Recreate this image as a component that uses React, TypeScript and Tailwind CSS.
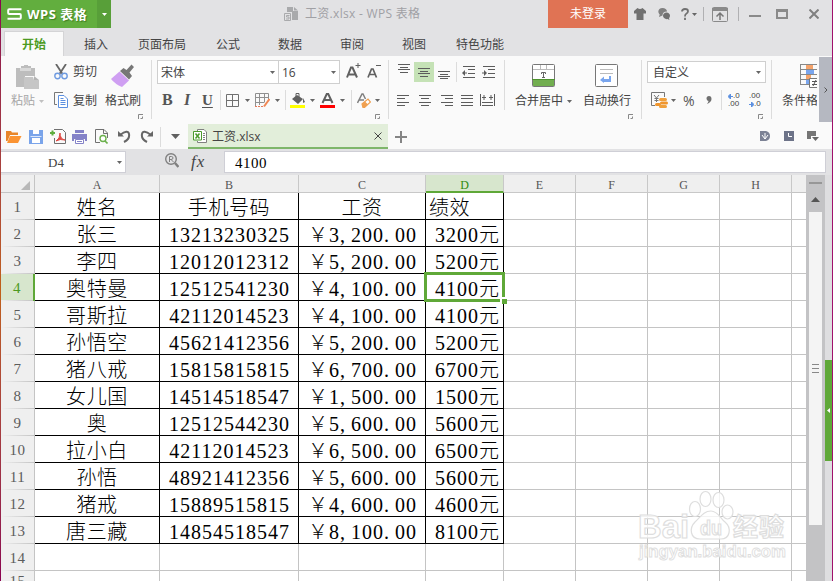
import type { ReactNode } from 'react'
import clsx from 'clsx'

const columns = [
    { name: 'A', width: 'w-[125px]' },
    { name: 'B', width: 'w-[139px]' },
    { name: 'C', width: 'w-[127px]' },
    { name: 'D', width: 'w-[78px]' },
    { name: 'E', width: 'w-[72px]' },
    { name: 'F', width: 'w-[72px]' },
    { name: 'G', width: 'w-[72px]' },
    { name: 'H', width: 'w-[72px]' },
]

const rows = [
    ['姓名', '手机号码', '工资', '绩效'],
    ['张三', '13213230325', '￥3,200.00', '3200元'],
    ['李四', '12012012312', '￥5,200.00', '5200元'],
    ['奥特曼', '12512541230', '￥4,100.00', '4100元'],
    ['哥斯拉', '42112014523', '￥4,100.00', '4100元'],
    ['孙悟空', '45621412356', '￥5,200.00', '5200元'],
    ['猪八戒', '15815815815', '￥6,700.00', '6700元'],
    ['女儿国', '14514518547', '￥1,500.00', '1500元'],
    ['奥', '12512544230', '￥5,600.00', '5600元'],
    ['拉小白', '42112014523', '￥6,500.00', '6500元'],
    ['孙悟', '48921412356', '￥5,600.00', '5600元'],
    ['猪戒', '15889515815', '￥4,600.00', '4600元'],
    ['唐三藏', '14854518547', '￥8,100.00', '8100元'],
    [],
    [],
]

const menu = [
    { label: '插入', className: 'ml-[20px] w-[24px]' },
    { label: '页面布局', className: 'ml-[30px] w-[48px]' },
    { label: '公式', className: 'ml-[30px] w-[24px]' },
    { label: '数据', className: 'ml-[38px] w-[24px]' },
    { label: '审阅', className: 'ml-[38px] w-[24px]' },
    { label: '视图', className: 'ml-[38px] w-[24px]' },
    { label: '特色功能', className: 'ml-[30px] w-[48px]' },
]

type IconProps = { w: number; h: number; className?: string; children: ReactNode }

function Icon({ w, h, className, children }: IconProps) {
    return (
        <svg width={w} height={h} viewBox={`0 0 ${w} ${h}`} fill="none" className={clsx('shrink-0', className)}>
            {children}
        </svg>
    )
}

function Caret({ className, color = '#666' }: { className?: string; color?: string }) {
    return (
        <Icon w={5} h={3} className={className}>
            <path d="M0 0h5L2.5 3z" fill={color} />
        </Icon>
    )
}

function Divider({ className }: { className?: string }) {
    return <div className={clsx('w-px shrink-0', className)} />
}

function Launcher({ className }: { className?: string }) {
    return (
        <Icon w={5} h={5} className={className}>
            <path d="M.5 5V.5H5M2.5 4.5h2v-2" stroke="#888" />
        </Icon>
    )
}

function Lines({ d, w = 13, h = 11, className }: { d: string; w?: number; h?: number; className?: string }) {
    return (
        <Icon w={w} h={h} className={className}>
            <path d={d} stroke="#5c5c5c" />
        </Icon>
    )
}

function TitleBar() {
    return (
        <div className="flex h-[28px] shrink-0 items-center">
            <div className="flex h-full w-[96px] items-center bg-[#62ae3e] text-white">
                <Icon w={15} h={12} className="ml-[6px]">
                    <path d="M14.5 1.2H2.200Q1.2 1.2 1.2 2.200V5Q1.2 6 2.200 6h10.600Q13.800 6 13.800 7v2.800q0 1-1 1H.5" stroke="#fff" strokeWidth="2" />
                </Icon>
                <span className="ml-[5px] pt-px text-[13px] font-bold tracking-[0.500px] whitespace-nowrap [text-shadow:1px_1px_1px_#3f7d22]">WPS 表格</span>
            </div>
            <div className="flex h-full w-[14px] items-center justify-center bg-[#589f39]">
                <Caret color="#fff" />
            </div>
            <Icon w={14} h={14} className="ml-[173px]">
                <path d="M3 0h6v4h5v9H8V5H3z" fill="#a9aaac" />
                <path d="M10 0l4 3.500h-4z" fill="#a9aaac" />
                <path d="M.5 6.500h6v7h-6z" fill="#e2e2e4" stroke="#a9aaac" />
                <path d="M5.500 8.500h-3v1.500h2.500v2h-3" stroke="#a9aaac" />
            </Icon>
            <span className="ml-[7px] w-[120px] text-[12px] tracking-[0.300px] whitespace-nowrap text-[#a0a0a4]">工资.xlsx - WPS 表格</span>
            <div className="ml-[123px] flex h-full w-[80px] items-center justify-center bg-[#e07354] text-[12px] text-white">未登录</div>
            <Icon w={12} h={12} className="ml-[6px]">
                <path d="M0 3L3.500 0Q6 2 8.500 0L12 3v2.500h-2.500V12h-7V5.500H0z" fill="#707070" />
            </Icon>
            <Icon w={12} h={12} className="ml-[12px]">
                <path d="M4.500 0C7 0 9 1.500 9 3.500 6 3.500 4.500 5 4.500 7.500L1 9l.7-2.500C-1 4 .5 0 4.500 0z" fill="#808080" />
                <path d="M8.500 4.500c2 0 3.500 1.500 3.500 3.300 0 1-.4 1.800-1 2.400l.5 1.800-2-.9C7 11.500 5 9.700 5 7.800s1.500-3.300 3.500-3.300z" fill="#707070" />
            </Icon>
            <Icon w={8} h={12} className="ml-[11px]">
                <path d="M1 3.500Q1 1 4 1t3 2.300Q7 5 5 6 4 6.500 4 8.500M4 9.800V12" stroke="#707070" strokeWidth="1.800" />
            </Icon>
            <Caret className="ml-[3px]" />
            <Divider className="ml-[6px] h-[14px] bg-[#b0b0b2]" />
            <Icon w={16} h={15} className="ml-[8px]">
                <rect x=".5" y=".5" width="15" height="14" rx="1" stroke="#8a8a8a" />
                <path d="M0 1h16v3H0z" fill="#8a8a8a" />
                <path d="M8 13V7M4.500 9.500L8 6l3.500 3.500" stroke="#777" strokeWidth="1.500" />
            </Icon>
            <Divider className="ml-[10px] h-[14px] bg-[#b0b0b2]" />
            <Icon w={12} h={12} className="ml-[10px]">
                <path d="M0 8h12" stroke="#8a8a8a" strokeWidth="2" />
            </Icon>
            <Icon w={12} h={10} className="ml-[15px]">
                <path d="M0 0h12v10H0zM2 3v5h8V3z" fill="#8a8a8a" fillRule="evenodd" />
            </Icon>
            <Icon w={10} h={10} className="ml-[21px]">
                <path d="M.5.5l9 9M9.500.5l-9 9" stroke="#808080" strokeWidth="2" />
            </Icon>
        </div>
    )
}

function MenuTabs() {
    return (
        <div className="flex h-[28px] shrink-0 items-end text-[12px] text-[#444]">
            <div className="ml-[3px] flex h-[25px] w-[60px] items-center justify-center border border-b-0 border-[#d4d4d6] bg-[#fafafa] pt-[2px] font-bold text-[#4c9a22]">
                开始
            </div>
            {menu.map((item) => (
                <span key={item.label} className={clsx('flex h-[24px] items-center pt-[2px] whitespace-nowrap', item.className)}>
                    {item.label}
                </span>
            ))}
        </div>
    )
}

function ClipboardGroup() {
    return (
        <div className="flex h-full w-[150px] shrink-0 text-[12px] text-[#444]">
            <div className="flex w-[53px] flex-col pt-[9px]">
                <Icon w={24} h={24} className="ml-[15px]">
                    <path d="M0 3h5V1h3V0h4v1h3v2h4v8H9v11H0z" fill="#bdbdbd" />
                    <path d="M4 3h11v3H4z" fill="#d9d9d9" />
                    <path d="M8 12h9l1 3h5v9H8z" fill="#c6c6c6" />
                    <path d="M18 11l5 4h-5z" fill="#b5b5b5" />
                </Icon>
                <div className="mt-[3px] ml-[10px] flex items-center text-[#a6a6a6]">
                    <span className="leading-[18px]">粘贴</span>
                    <Caret className="ml-[4px]" color="#c0c0c0" />
                </div>
            </div>
            <div className="flex w-[47px] flex-col pt-[7px]">
                <div className="flex h-[18px] items-center gap-[5px]">
                    <Icon w={14} h={16}>
                        <path d="M2 0l6.500 10M12 0L5.500 10" stroke="#666" strokeWidth="1.800" />
                        <circle cx="3.500" cy="12" r="2.700" stroke="#6f9be0" strokeWidth="1.400" />
                        <circle cx="10.500" cy="12" r="2.700" stroke="#6f9be0" strokeWidth="1.400" />
                    </Icon>
                    <span className="whitespace-nowrap">剪切</span>
                </div>
                <div className="mt-[10px] flex h-[18px] items-center gap-[5px]">
                    <Icon w={14} h={16}>
                        <path d="M9 .5H.5v12H3" stroke="#777" />
                        <path d="M4.500 3.500H10l3.500 3.500v8.500h-9z" fill="#fff" stroke="#5b8fe0" />
                        <path d="M6.500 8.500h5M6.500 10.500h5M6.500 12.500h5M6.500 6.500h3" stroke="#5b8fe0" />
                    </Icon>
                    <span className="pt-px whitespace-nowrap">复制</span>
                </div>
            </div>
            <div className="flex flex-col pt-[8px] pl-[4px]">
                <Icon w={24} h={23} className="ml-[6px]">
                    <path d="M8.500 7.500L18 16.500 11 23Q4 20 0 15z" fill="#cf9ff2" />
                    <path d="M9 7l3.500-3 3 2L20.500.5 23 3l-4.500 5.500L21 12l-3 3.500z" fill="#777" />
                </Icon>
                <span className="mt-[5px] leading-[18px] whitespace-nowrap">格式刷</span>
                <Launcher className="mt-[4px] ml-[33px]" />
            </div>
        </div>
    )
}

function FontGroup() {
    return (
        <div className="flex h-full w-[236px] shrink-0 flex-col pt-[4px] pl-[5px]">
            <div className="flex h-[24px] text-[12px] text-[#444]">
                <div className="flex w-[122px] items-center justify-between border border-[#cfcfcf] bg-white pr-[3px] pl-[3px]">
                    <span className="pt-px">宋体</span> <Caret />
                </div>
                <div className="-ml-px flex w-[62px] items-center justify-between border border-[#cfcfcf] bg-white pr-[3px] pl-[3px]">
                    <span className="pt-px">16</span> <Caret />
                </div>
                <Icon w={15} h={16} className="mt-[3px] ml-[6px]">
                    <path d="M1 14.500L5 4.500h1.500l4.500 10M3 11.500h6" stroke="#606060" strokeWidth="2" />
                    <path d="M9.500 2.500h5M12 0v5" stroke="#606060" />
                </Icon>
                <Icon w={14} h={16} className="mt-[3px] ml-[6px]">
                    <path d="M1 14.500l3.500-8.500H6l3.500 8.500M3 11.500h5" stroke="#606060" strokeWidth="1.700" />
                    <path d="M9 2.500h5" stroke="#606060" />
                </Icon>
            </div>
            <div className="mt-[6px] flex h-[20px] items-center font-['Liberation_Serif',serif] text-[16px] font-bold text-[#555]">
                <span className="ml-[5px] w-[12px]">B</span>
                <span className="ml-[10px] w-[8px] italic">I</span>
                <span className="ml-[10px] w-[12px] text-[15px] underline underline-offset-2">U</span>
                <Divider className="ml-[6px] h-[20px] bg-[#dcdcdc]" />
                <Icon w={13} h={13} className="ml-[5px]">
                    <path d="M.5.5h12v12H.5zM6.500 0v13M0 6.500h13" stroke="#707070" />
                </Icon>
                <Caret className="ml-[6px]" />
                <Icon w={15} h={15} className="ml-[5px]">
                    <path d="M.5 13V.5h13V6M.5 4.500h13M.5 9.500h9M4.500 0v12M9.500 0v9" stroke="#909090" />
                    <path d="M0 13.500h9" stroke="#e5795a" strokeDasharray="2 1" />
                    <path d="M9 13.500L14.500 6" stroke="#f08754" strokeWidth="2" />
                </Icon>
                <Caret className="ml-[5px]" />
                <Divider className="ml-[5px] h-[20px] bg-[#dcdcdc]" />
                <Icon w={15} h={15} className="ml-[4px]">
                    <path d="M2 6l5-4 6 4-5 5zM13 5l2 4-2 1z" fill="#606060" />
                    <path d="M6 5V.5h3V4" stroke="#606060" />
                    <path d="M0 12h15v3H0z" fill="#ff0" />
                </Icon>
                <Caret className="ml-[5px]" />
                <Icon w={15} h={15} className="ml-[5px]">
                    <path d="M2.500 10L7 .5h1L12.500 10M4.500 7h6" stroke="#606060" strokeWidth="2" />
                    <path d="M0 12h15v3H0z" fill="#f00" />
                </Icon>
                <Caret className="ml-[5px]" />
                <Divider className="ml-[6px] h-[20px] bg-[#dcdcdc]" />
                <Icon w={14} h={15} className="ml-[5px]">
                    <path d="M.5 10L5 1h1l2.500 5M2.500 7H7" stroke="#808080" strokeWidth="1.500" />
                    <path d="M5 11l6-5 2.500 3-6 5.500H6z" fill="#fff" stroke="#f0a050" strokeWidth="1.200" />
                    <path d="M5 11l3-2.500 3 3-3.500 3H6z" fill="#f0a050" />
                </Icon>
                <Caret className="ml-[4px]" />
            </div>
            <Launcher className="mt-[4px] ml-[218px]" />
        </div>
    )
}

function AlignGroup() {
    return (
        <div className="flex h-full w-[115px] shrink-0 flex-col pt-[6px]">
            <div className="flex h-[20px] items-center">
                <Lines className="mb-[7px] ml-[9px]" d="M0 .5h12M2 3.500h8M0 5.500h12M2 8.500h8" h={9} />
                <div className="ml-[3px] flex h-[20px] w-[20px] items-center justify-center bg-[#c5e2b6]">
                    <Lines w={12} h={9} d="M0 .5h12M2 3.500h8M0 5.500h12M2 8.500h8" />
                </div>
                <Lines className="mt-[6px] ml-[4px]" w={12} h={8} d="M0 .5h12M2 3.500h8M0 5.500h12M2 7.500h8" />
                <Divider className="ml-[6px] h-[20px] bg-[#dcdcdc]" />
                <Lines className="ml-[5px]" h={14} d="M1 1.500h12M6 4.500h7M6 8.500h7M1 12.500h12M0 8h5M2.500 5.500v5M1.500 6.500v3" />
                <Lines className="ml-[7px]" h={14} d="M1 1.500h12M6 4.500h7M6 8.500h7M1 12.500h12M0 8h5M2.500 5.500v5M3.500 6.500v3" />
            </div>
            <div className="mt-[8px] flex h-[20px] items-center">
                <Lines className="ml-[8px]" w={12} d="M0 .5h12M0 3.500h8M0 7.500h12M0 10.500h8" />
                <Lines className="ml-[10px]" w={12} d="M0 .5h12M2 3.500h8M0 7.500h12M2 10.500h8" />
                <Lines className="ml-[10px]" w={12} d="M0 .5h12M4 3.500h8M0 7.500h12M4 10.500h8" />
                <Lines className="ml-[8px]" w={12} d="M0 .5h12M0 3.500h12M0 7.500h12M0 10.500h12" />
                <Lines className="ml-[7px]" w={15} h={12} d="M.5 0v12M14.500 0v12M2 3.500h4M9 3.500h4M4 1v5M11 1v5M2 8.500h11M2 11.500h11" />
            </div>
        </div>
    )
}

function MergeGroup() {
    return (
        <div className="flex h-full w-[136px] shrink-0 pt-[8px] text-[12px] text-[#444]">
            <div className="ml-[10px] flex flex-col">
                <Icon w={23} h={23} className="ml-[17px]">
                    <rect x=".5" y=".5" width="22" height="22" rx="1" fill="#fff" stroke="#777" />
                    <path d="M1 5.500h21M8.500 1v5M14.500 1v5" stroke="#bbb" />
                    <path d="M1 15h21v7H1z" fill="#72ae50" />
                    <path d="M0 15.500h23" stroke="#4f9330" />
                    <path d="M9.500 10V8.500h4V10M11.500 8.500v5M10 13.500h3" stroke="#666" />
                </Icon>
                <div className="mt-[5px] flex items-center">
                    <span className="leading-[18px] whitespace-nowrap">合并居中</span>
                    <Caret className="ml-[4px]" />
                </div>
            </div>
            <div className="ml-[11px] flex flex-col">
                <Icon w={23} h={23} className="ml-[12px]">
                    <rect x=".5" y=".5" width="22" height="22" rx="1" fill="#fff" stroke="#777" />
                    <path d="M5 5.500h13M5 9.500h13" stroke="#bbb" />
                    <path d="M5 16l4-3.500V15h5v-3h2v6H9v1z" fill="#79a5ee" />
                </Icon>
                <span className="mt-[5px] w-[48px] leading-[18px] whitespace-nowrap">自动换行</span>
                <Launcher className="mt-[4px] ml-[45px]" />
            </div>
        </div>
    )
}

function NumberGroup() {
    return (
        <div className="flex h-full w-[129px] shrink-0 flex-col pt-[5px] pl-[5px]">
            <div className="flex h-[22px] w-[119px] items-center justify-between border border-[#cfcfcf] bg-white px-[4px] text-[12px] text-[#444]">
                <span className="pt-px pl-px">自定义</span> <Caret />
            </div>
            <div className="mt-[7px] flex h-[20px] items-center">
                <Icon w={17} h={16} className="ml-[4px]">
                    <path d="M4 13.500H.5V.5h13V5" stroke="#777" />
                    <path d="M3 3l2.500 3L8 3M5.500 6v4M3.500 6.500h4M3.500 8.500h4" stroke="#777" />
                    <rect x="8" y="6" width="8" height="3" rx="1.500" fill="#f0a03c" />
                    <rect x="9" y="9.500" width="8" height="3" rx="1.500" fill="#f0952c" />
                    <rect x="4" y="11" width="6" height="3" rx="1.500" fill="#f0952c" />
                    <rect x="8" y="13" width="8" height="3" rx="1.500" fill="#f0a03c" />
                </Icon>
                <Caret className="ml-[3px]" />
                <span className="ml-[7px] w-[12px] text-[14px] text-[#555]">%</span>
                <Icon w={6} h={8} className="ml-[11px]">
                    <path d="M.5 2.500Q.5 0 3 0t2.500 3Q5.500 6 1 8q1.500-2 1.500-3-2-.5-2-2.500z" fill="#707070" />
                </Icon>
                <Divider className="ml-[9px] h-[20px] bg-[#dcdcdc]" />
                <div className="ml-[6px] flex w-[13px] flex-col font-['Liberation_Sans',sans-serif] text-[8px] leading-[8px] text-[#444]">
                    <span className="flex items-center"><Icon w={5} h={5}><path d="M0 2.500L2.500 0v5zM2 2.500h3" fill="#5b8fe0" stroke="#5b8fe0" /></Icon>.0</span>
                    <span>.00</span>
                </div>
                <div className="ml-[8px] flex w-[13px] flex-col font-['Liberation_Sans',sans-serif] text-[8px] leading-[8px] text-[#444]">
                    <span>.00</span>
                    <span className="flex items-center"><Icon w={5} h={5}><path d="M5 2.500L2.500 0v5zM0 2.500h3" fill="#5b8fe0" stroke="#5b8fe0" /></Icon>.0</span>
                </div>
            </div>
            <Launcher className="mt-[4px] ml-[111px]" />
        </div>
    )
}

function Ribbon() {
    return (
        <div className="flex h-[66px] shrink-0 overflow-hidden bg-[#fafafa]">
            <ClipboardGroup />
            <Divider className="mt-[4px] h-[59px] bg-[#dcdcdc]" />
            <FontGroup />
            <Divider className="mt-[4px] h-[59px] bg-[#dcdcdc]" />
            <AlignGroup />
            <Divider className="mt-[4px] h-[50px] bg-[#dcdcdc]" />
            <MergeGroup />
            <Divider className="mt-[4px] h-[59px] bg-[#dcdcdc]" />
            <NumberGroup />
            <Divider className="mt-[4px] h-[59px] bg-[#dcdcdc]" />
            <div className="ml-[10px] flex w-[35px] shrink-0 flex-col overflow-hidden pt-[8px] text-[12px] text-[#444]">
                <Icon w={17} h={24} className="ml-[18px]">
                    <path d="M0 .5h17M0 5.500h17M0 10.500h17M0 15.500h17M0 20.500h9M.5 0v21" stroke="#888" />
                    <path d="M6 1h7v4H6zM6 11h5v4H6z" fill="#f5a36b" />
                    <path d="M6 6h8v4H6zM6 16h3v4H6z" fill="#79a5ee" />
                    <path d="M17 14.500H9.500v9H17" fill="#fff" stroke="#777" />
                    <path d="M12 17.500h5M12 20.500h5M16 16l-3 6" stroke="#555" />
                </Icon>
                <span className="mt-[4px] leading-[18px] whitespace-nowrap">条件格</span>
            </div>
            <div className="mt-px ml-[2px] flex h-[65px] w-[13px] shrink-0 items-center justify-center bg-[#b5b8c1]">
                <Icon w={4} h={6}>
                    <path d="M.5.5L3 3 .5 5.500" stroke="#555" />
                </Icon>
            </div>
        </div>
    )
}

function QuickBar() {
    return (
        <div className="flex h-[27px] shrink-0 items-center bg-[#fafafa] pt-[2px]">
            <Icon w={16} h={12} className="ml-[5px]">
                <path d="M0 0h5l1 1.500h6V4H4L1.500 10H0z" fill="#e8862a" />
                <path d="M4 5h11.500L12 12H1z" fill="#fb9433" />
            </Icon>
            <Icon w={14} h={14} className="ml-[7px]">
                <path d="M0 0h14v14H0z" fill="#7aa4ea" />
                <path d="M4 0h6v4H4zM3 8h8v5H3z" fill="#fff" />
                <path d="M1.500 6.500h11" stroke="#dbe7fb" />
            </Icon>
            <Icon w={17} h={15} className="ml-[7px]">
                <path d="M4 .5h8.500l3 3v11H4.500V9" stroke="#707070" />
                <path d="M0 4h5M2.500 1.500v5" stroke="#5fae40" strokeWidth="2" />
                <path d="M6 12q4-2 4-8 0 6 5 7-5-1.500-9 1z" fill="#e04b45" stroke="#e04b45" />
            </Icon>
            <Icon w={15} h={14} className="ml-[5px]">
                <path d="M3 0h9v3H3zM0 4h15v7h-2V9H2v2H0z" fill="#8482c8" />
                <path d="M3.500 9.500h8v4h-8z" fill="#fff" stroke="#8482c8" />
                <path d="M5 11.500h5" stroke="#8482c8" />
            </Icon>
            <Icon w={13} h={15} className="ml-[8px]">
                <path d="M12.500 9V4L9 .5H.5v13H5M8.500.5v4h4" stroke="#707070" />
                <circle cx="8" cy="9.500" r="3" fill="#fff" stroke="#6bb04c" strokeWidth="1.400" />
                <path d="M10 12l2.500 2.500" stroke="#6bb04c" strokeWidth="1.600" />
            </Icon>
            <Icon w={13} h={13} className="ml-[10px]">
                <path d="M2 5Q10-1 11 4T6 12" stroke="#666" strokeWidth="2" />
                <path d="M0 1l6 5.500H0z" fill="#666" />
            </Icon>
            <Icon w={13} h={13} className="ml-[9px]">
                <path d="M11 5Q3-1 2 4t5 8" stroke="#666" strokeWidth="2" />
                <path d="M13 1L7 6.500h6z" fill="#666" />
            </Icon>
            <Divider className="ml-[7px] h-[20px] bg-[#dcdcdc]" />
            <Icon w={9} h={5} className="ml-[10px]">
                <path d="M0 0h9L4.500 5z" fill="#606060" />
            </Icon>
            <div className="ml-[8px] flex h-full w-[200px] items-center border-b-2 border-[#7eb66a] bg-[#e2eeda]">
                <Icon w={14} h={14} className="ml-[5px]">
                    <path d="M4.500 2V.5H11L13.500 3v10.500h-9V12" fill="#fff" stroke="#808080" />
                    <path d="M10 4.500h2M10 6.500h2M10 8.500h2M10 10.500h2" stroke="#808080" />
                    <path d="M.5 2.500h8v8.500h-8z" fill="#fff" stroke="#4b9a2c" />
                    <path d="M2.500 4.500l4 5M6.500 4.500l-4 5" stroke="#4b9a2c" strokeWidth="1.500" />
                </Icon>
                <span className="ml-[5px] pt-[2px] text-[12px] text-[#444]">工资.xlsx</span>
                <Icon w={8} h={8} className="mr-[6px] ml-auto">
                    <path d="M.5.5l7 7M7.500.5l-7 7" stroke="#444" />
                </Icon>
            </div>
            <Icon w={12} h={12} className="ml-[7px]">
                <path d="M0 6h12M6 0v12" stroke="#858585" strokeWidth="2" />
            </Icon>
            <Icon w={10} h={10} className="mb-[2px] ml-auto">
                <path d="M0 0h6q4 1 4 5t-4 5H0z" fill="#7c8295" />
                <path d="M2 4l3 4 3-4M5 8V2" stroke="#fff" />
            </Icon>
            <Icon w={10} h={10} className="mb-[2px] ml-[14px]">
                <path d="M0 0h10v10H0z" fill="#6d7388" />
                <path d="M4.500 2v3.500H8" stroke="#fff" />
            </Icon>
            <Icon w={12} h={10} className="mr-[13px] mb-[2px] ml-[13px]">
                <path d="M0 0h9v5H4v3H0z" fill="#757575" />
                <path d="M5 6h7L8.500 10z" fill="#666" />
            </Icon>
        </div>
    )
}

function FormulaBar() {
    return (
        <div className="flex h-[26px] shrink-0 items-center bg-[#e2e2e4] font-['Liberation_Serif',serif] text-[15px]">
            <div className="flex h-[22px] w-[125px] items-center border border-l-0 border-[#cfcfd6] bg-white">
                <span className="ml-[47px] pt-[2px] text-[13px] text-[#444]">D4</span>
                <Caret className="mr-[3px] ml-auto" />
            </div>
            <Icon w={14} h={15} className="mb-[3px] ml-[39px]">
                <circle cx="6" cy="6" r="5.300" stroke="#808080" strokeWidth="1.400" />
                <path d="M10 10l3.500 4" stroke="#808080" strokeWidth="2.500" />
                <path d="M4.500 9V3.500h2q1.500 0 1.500 1.500T6 6.500h-1M6 6.500L8.500 9" stroke="#808080" />
            </Icon>
            <span className="ml-[12px] w-[20px] pb-px text-[17px] tracking-[1px] text-[#444] italic">fx</span>
            <div className="ml-[13px] flex h-[22px] w-[602px] items-center border border-[#cfcfd6] bg-white pt-[2px] pl-[10px] tracking-[0.500px] text-black">4100</div>
        </div>
    )
}

// commas and dots take the same advance as a digit
function CellText({ value }: { value: string }) {
    return (
        <span className="whitespace-nowrap">
            {value.split(/([,.])/).map((part, i) =>
                part === ',' || part === '.' ? (
                    <span key={i} className="tracking-[6px]">{part}</span>
                ) : (
                    part
                )
            )}
        </span>
    )
}

function Sheet() {
    return (
        <div className="flex w-[805px] flex-col overflow-hidden bg-white">
            <div className="flex h-[18px] shrink-0 bg-[#efefef] font-['Liberation_Serif',serif] text-[12px] text-[#555]">
                <div className="flex w-[34px] shrink-0 items-end justify-end border-r border-b border-[#c4c4c4] pr-[4px] pb-[2px]">
                    <Icon w={9} h={9}>
                        <path d="M9 0v9H0z" fill="#b8b8b8" />
                    </Icon>
                </div>
                {columns.map((col) => (
                    <div
                        key={col.name}
                        className={clsx(
                            'flex shrink-0 items-center justify-center border-r border-[#c8c8c8] pt-[3px]',
                            col.width,
                            col.name === 'D' ? 'border-b-2 border-b-[#5fa838] bg-[#d7e6cd] text-[#2f8a0c]' : 'border-b'
                        )}
                    >
                        {col.name}
                    </div>
                ))}
                <div className="flex-1 border-b border-[#c4c4c4]" />
            </div>
            {rows.map((row, r) => (
                <div key={r} className="flex h-[27px] shrink-0">
                    <div
                        className={clsx(
                            "flex w-[34px] shrink-0 flex-col font-['Liberation_Serif',serif] text-[15px] tracking-[0.500px]",
                            r === 3
                                ? 'border-r-2 border-[#5fa838] bg-[#d7e6cd] text-[#4c9a22]'
                                : 'border-r border-[#c4c4c4] bg-[#efefef] text-[#5c5c5c]'
                        )}
                    >
                        <span className={clsx('flex items-center justify-center pt-[3px]', r === rows.length - 1 ? 'h-[18px]' : 'h-[26px]')}>
                            {r + 1}
                        </span>
                        <div className="h-px bg-linear-to-r from-[#efefef] to-[#c4c4c4]" />
                    </div>
                    {columns.map((col, c) => (
                        <div
                            key={col.name}
                            className={clsx(
                                "relative flex shrink-0 items-center border-r border-b pt-[3px] font-['Liberation_Serif','Noto_Sans_CJK_SC',serif] text-[20px] leading-none font-light text-black",
                                col.width,
                                c === 0 || r === 0 ? 'tracking-[0.600px]' : 'tracking-[1px]',
                                c < 4 && r < 13 ? 'border-black' : 'border-[#c4c4c4]',
                                c === 3 && r > 0 && 'justify-end pr-[3px]',
                                c === 3 && r === 0 && 'pl-[3px]',
                                c === 2 && r > 0 && 'justify-end pr-[8px]',
                                c === 1 && r > 0 && 'pl-px',
                                (c < 2 || (c === 2 && r === 0)) && 'justify-center'
                            )}
                        >
                            {row[c] && <CellText value={row[c]} />}
                            {r === 3 && c === 3 && (
                                <>
                                    <div className="absolute -top-[2px] -left-[2px] z-10 h-[30px] w-[81px] border-[3px] border-[#5fa838]" />
                                    <div className="absolute top-[23px] left-[74px] z-10 h-[7px] w-[7px] border-t-2 border-l-2 border-white bg-[#5fa838]" />
                                </>
                            )}
                        </div>
                    ))}
                    <div className="flex-1 border-b border-[#c4c4c4]" />
                </div>
            ))}
        </div>
    )
}

function ScrollBar() {
    return (
        <div className="flex w-[19px] shrink-0 flex-col items-center bg-[#c3c3c5]">
            <div className="mt-[7px] h-[2px] w-[13px] bg-[#979797]" />
            <Icon w={9} h={5} className="mt-[13px]">
                <path d="M4.500 0L9 5H0z" fill="#555" />
            </Icon>
            <div className="mt-[10px] flex h-[313px] w-[13px] flex-col items-center justify-center gap-[3px] bg-[#f4f4f4]">
                <div className="h-px w-[7px] bg-[#888]" />
                <div className="h-px w-[7px] bg-[#888]" />
                <div className="h-px w-[7px] bg-[#888]" />
            </div>
        </div>
    )
}

function Watermark() {
    return (
        <svg
            width="156"
            height="80"
            viewBox="0 0 156 80"
            className="absolute top-[487px] left-[635px] font-['Liberation_Sans','Noto_Sans_CJK_SC',sans-serif]"
            fill="#fff"
            stroke="#dedede"
            strokeWidth="1.200"
        >
            <g fillOpacity=".8" fontWeight="bold">
                <text x="3" y="51" fontSize="34" textLength="51" lengthAdjust="spacingAndGlyphs">Bai</text>
                <ellipse cx="60" cy="22" rx="5.500" ry="7.500" />
                <ellipse cx="70.500" cy="12" rx="5.500" ry="7.500" />
                <ellipse cx="83.500" cy="13" rx="5.500" ry="7.500" />
                <ellipse cx="92.500" cy="25" rx="5.500" ry="7" />
                <path d="M76 24c7 0 9 7 14 11 7 6 5 17-4 17H65c-10 0-11-11-5-17 5-4 8-11 16-11z" />
                <text x="65" y="48" fontSize="20" textLength="22" lengthAdjust="spacingAndGlyphs">du</text>
                <text x="98" y="49" fontSize="25" textLength="51">经验</text>
                <text x="4" y="70" fontSize="17" strokeWidth=".9" textLength="147" lengthAdjust="spacingAndGlyphs">jingyan.baidu.com</text>
            </g>
        </svg>
    )
}

export default function App() {
    return (
        <div className="relative flex h-[581px] w-[833px] overflow-hidden bg-[#e2e2e4] font-['Open_Sans','Noto_Sans_CJK_SC',sans-serif]">
            <div className="w-px shrink-0 bg-linear-to-b from-[#8a0050] via-[#c06018] to-[#8a0050]" />
            <div className="flex w-[831px] shrink-0 flex-col">
                <TitleBar />
                <MenuTabs />
                <Ribbon />
                <QuickBar />
                <FormulaBar />
                <div className="flex min-h-0 flex-1">
                    <Sheet />
                    <ScrollBar />
                    <div className="flex w-[7px] shrink-0 flex-col bg-[#dedee0]">
                        <div className="mt-[185px] flex h-[101px] items-center justify-center bg-[#5fa838]">
                            <Icon w={3} h={5}>
                                <path d="M3 0v5L0 2.500z" fill="#fff" />
                            </Icon>
                        </div>
                    </div>
                </div>
            </div>
            <div className="w-px shrink-0 bg-[#a0106c]" />
            <Watermark />
        </div>
    )
}
